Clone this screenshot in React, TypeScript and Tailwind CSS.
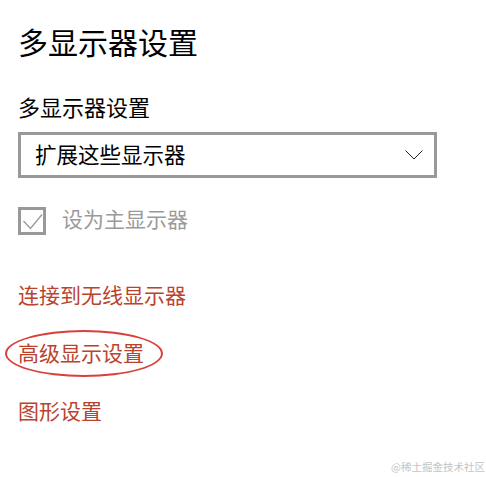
const font = { fontFamily: '"Noto Sans CJK SC", "Noto Sans", sans-serif' }

export default function App() {
  return (
    <div className="relative w-[486px] h-[477px] bg-white overflow-hidden" style={font}>
      <div className="flex flex-col pl-[18px] pt-[21px]">
        <h1 className="text-[30px] leading-[40px] font-normal text-black">多显示器设置</h1>

        <div className="mt-[30px] text-[22px] leading-[30px] text-black">多显示器设置</div>

        <div className="mt-[11px] w-[419px] h-[46px] border-[3px] border-[#999999] flex items-center justify-between pl-[14px] pr-[11px]">
          <span className="text-[21.5px] leading-[30px] text-black pb-[2px]">扩展这些显示器</span>
          <svg width="18" height="10" viewBox="0 0 18 10" fill="none">
            <path d="M0.5 0.5 L9 9 L17.5 0.5" stroke="#222" strokeWidth="1" />
          </svg>
        </div>

        <div className="mt-[29px] h-[28px] flex items-start gap-[16px]">
          <div className="w-[28px] h-[28px] border-[3px] border-[#999999]">
            <svg width="22" height="22" viewBox="0 0 22 22" fill="none">
              <path d="M2.5 11 L9.5 18.5 L21 4.5" stroke="#999999" strokeWidth="1.3" />
            </svg>
          </div>
          <span className="text-[21px] leading-[22px] text-[#9a9a9a]">设为主显示器</span>
        </div>

        <div className="mt-[44px] text-[21px] leading-[30px] text-[#b9432d]">连接到无线显示器</div>

        <div className="relative mt-[28px] w-fit text-[21px] leading-[30px] text-[#b9432d]">
          高级显示设置
          <div className="absolute left-[-13px] top-[-7px] w-[158px] h-[47px] rounded-[50%] border-[2.5px] border-[#d8403c]" />
        </div>

        <div className="mt-[28px] text-[21px] leading-[30px] text-[#b9432d]">图形设置</div>
      </div>

      <div className="absolute left-[391px] top-[459px] text-[10.5px] leading-[16px] text-[#c4c4c4]">@稀土掘金技术社区</div>
    </div>
  )
}
